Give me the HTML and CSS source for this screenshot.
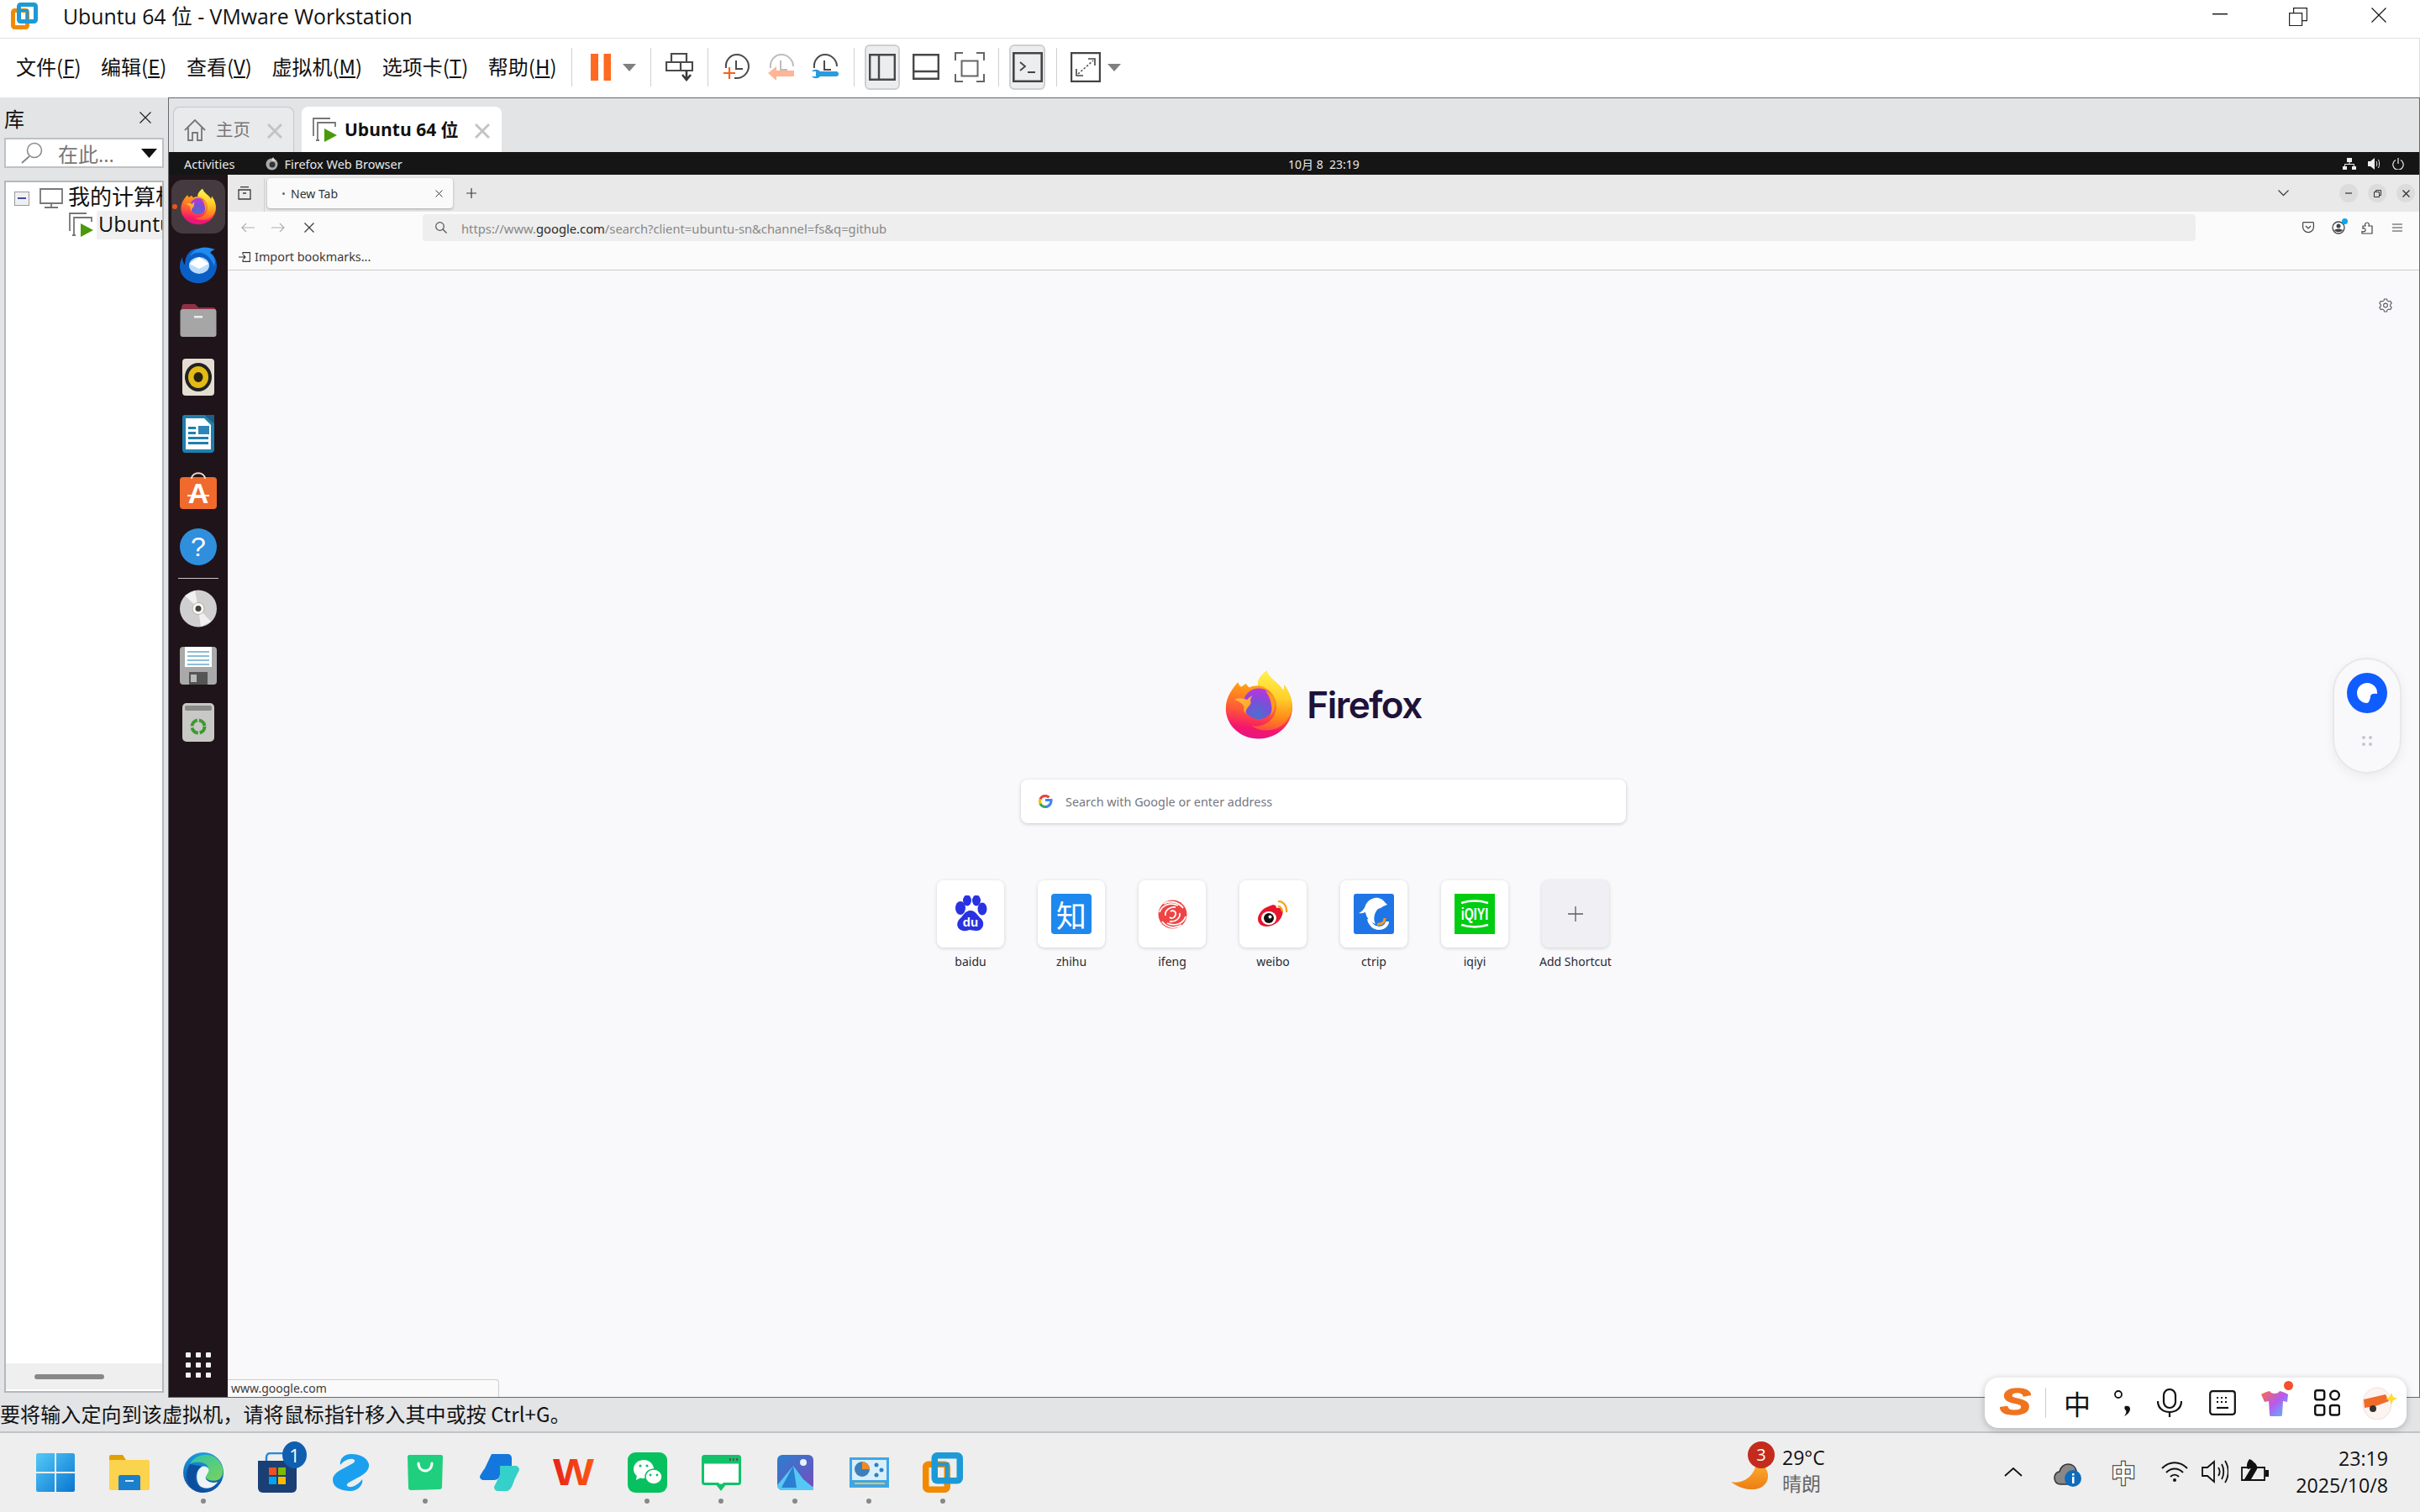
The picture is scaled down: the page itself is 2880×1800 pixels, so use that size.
FILE: index.html
```html
<!DOCTYPE html>
<html lang="zh-CN">
<head>
<meta charset="utf-8">
<title>Ubuntu 64 位 - VMware Workstation</title>
<link rel="stylesheet" href="styles.css">
</head>
<body>
<svg class="defs" aria-hidden="true">
  <defs>
    <linearGradient id="ffBody" x1=".6" y1="0" x2=".45" y2="1">
      <stop offset="0" stop-color="#ffd026"/><stop offset=".28" stop-color="#ff9a16"/><stop offset=".6" stop-color="#ff5a36"/><stop offset=".86" stop-color="#f5156c"/><stop offset="1" stop-color="#e31587"/>
    </linearGradient>
    <linearGradient id="ffWing" x1=".5" y1="0" x2=".45" y2="1">
      <stop offset="0" stop-color="#fff44f"/><stop offset=".45" stop-color="#ffcf2a"/><stop offset=".78" stop-color="#ff8a1a"/><stop offset="1" stop-color="#ff4f3d"/>
    </linearGradient>
    <linearGradient id="ffHead" x1="0" y1="0" x2="1" y2="1">
      <stop offset="0" stop-color="#ffc24f"/><stop offset="1" stop-color="#ff9a1a"/>
    </linearGradient>
    <radialGradient id="ffGlobe" cx=".45" cy=".85" r=".85">
      <stop offset="0" stop-color="#4a70cf"/><stop offset=".5" stop-color="#7a4fd8"/><stop offset="1" stop-color="#bb34e0"/>
    </radialGradient>
    <linearGradient id="winBlue" x1="0" y1="0" x2="1" y2="1"><stop offset="0" stop-color="#55c9f8"/><stop offset="1" stop-color="#0a76d0"/></linearGradient>
    <linearGradient id="edgeG" x1="0" y1="0" x2="1" y2="1"><stop offset="0" stop-color="#2fc3a8"/><stop offset="1" stop-color="#7ad45a"/></linearGradient>
    <linearGradient id="edgeB" x1="0" y1="0" x2="0" y2="1"><stop offset="0" stop-color="#1a9be0"/><stop offset="1" stop-color="#0c4f9f"/></linearGradient>
    <linearGradient id="shirtG" x1="0" y1="0" x2="1" y2="1"><stop offset="0" stop-color="#ff6a45"/><stop offset=".5" stop-color="#b45cf0"/><stop offset="1" stop-color="#4cc6ff"/></linearGradient>
    <linearGradient id="photoG" x1="0" y1="0" x2="1" y2="1"><stop offset="0" stop-color="#2a7fd0"/><stop offset="1" stop-color="#7a4bbd"/></linearGradient>
    <linearGradient id="moonG" x1="0" y1="0" x2="0" y2="1"><stop offset="0" stop-color="#fbb731"/><stop offset="1" stop-color="#ee7d14"/></linearGradient>
    <linearGradient id="wpsG" x1="0" y1="0" x2="1" y2="0"><stop offset="0" stop-color="#e8201a"/><stop offset="1" stop-color="#fb5a12"/></linearGradient>
    <symbol id="ff" viewBox="0 0 100 101">
      <path fill="url(#ffBody)" d="M19 17C11 26 1 39 1 56c0 25 22 45 49 45s50-20 50-47c0-13-6-25-12-33 0 3 0 6-2 8C80 18 65 12 62 0 55 5 47 14 49 22c-5 0-10 1-13 3-2-2-4-4-5-6l-7 5c-3-2-4-5-5-7z"/>
      <path fill="url(#ffWing)" d="M62 0C55 5 47 14 49 22c14 1 28 14 27 32-1 19-18 31-36 28 17 13 52 8 59-24 2-14-4-28-11-37 0 3 0 6-2 8C80 18 65 12 62 0z"/>
      <circle cx="50" cy="49" r="23" fill="url(#ffGlobe)"/>
      <path fill="url(#ffHead)" d="M14 43c6-3 13-2 19 0 2-3 5-5 8-6-3 3-4 6-3 9 1 4-3 6-6 11-1 2-2 5-1 7-3-2-4-6-3-9 1-5-8-10-14-12z"/>
      <path fill="#ff9a1f" d="M60 30c9 3 14 10 14 20 0 7-3 13-7 17 2-5 3-10 2-15-1-8-4-16-9-22z"/>
    </symbol>
    <symbol id="vm" viewBox="0 0 32 32">
      <rect x="2.500" y="9.500" width="17" height="20" rx="2" fill="none" stroke="#f18a00" stroke-width="5"/>
      <rect x="9.500" y="2.500" width="20" height="20" rx="2" fill="none" stroke="#1d9ad6" stroke-width="5"/>
      <rect x="9.500" y="9.500" width="10" height="13" fill="none" stroke="#1d9ad6" stroke-width="3"/>
    </symbol>
    <symbol id="vmrun" viewBox="0 0 30 30">
      <path fill="none" stroke="#777" stroke-width="1.800" d="M1 22V1h20M4 27h4"/>
      <path fill="none" stroke="#777" stroke-width="1.800" d="M6 26V6h21v5"/>
      <path fill="#4a9a0c" d="M14 13l15 8-15 8z"/>
    </symbol>
  </defs>
</svg>

<div class="app">
  <header class="titlebar">
    <svg class="title-logo" width="32" height="32"><use href="#vm"/></svg>
    <span class="title-text">Ubuntu 64 位 - VMware Workstation</span>
    <div class="winctl">
      <svg width="18" height="2" class="wc-min"><rect width="18" height="1.400" fill="#111"/></svg>
      <svg width="22" height="22" class="wc-max" viewBox="0 0 22 22"><path fill="none" stroke="#222" stroke-width="1.200" d="M.6 6.600h15v15H.6zM5.600 6.600V.6h15.800v15h-6"/></svg>
      <svg width="18" height="18" class="wc-close" viewBox="0 0 18 18"><path stroke="#111" stroke-width="1.100" d="M.5.5l17 17M17.500.5l-17 17"/></svg>
    </div>
  </header>

  <nav class="toolbar">
    <ul class="menus">
      <li>文件(<u>F</u>)</li><li>编辑(<u>E</u>)</li><li>查看(<u>V</u>)</li><li>虚拟机(<u>M</u>)</li><li>选项卡(<u>T</u>)</li><li>帮助(<u>H</u>)</li>
    </ul>
    <i class="sep s-first"></i>
    <svg class="ml22" width="24" height="32" viewBox="0 0 24 32"><path fill="#ff6a20" d="M0 0h9v32H0zM15.500 0h8.500v32h-8.500z"/></svg>
    <svg class="ml14" width="16" height="9" viewBox="0 0 16 9"><path fill="#808080" d="M0 0h16L8 9z"/></svg>
    <i class="sep ml17"></i>
    <svg class="ml17" width="33" height="34" viewBox="0 0 33 34"><path fill="none" stroke="#4a4a4a" stroke-width="2.200" d="M7 1h18v10H7zM1 11h31v10H1zM18 11v10"/><path fill="none" stroke="#3a3a3a" stroke-width="2.600" d="M25 21v11M20 26l5 6 5-6"/></svg>
    <i class="sep ml17"></i>
    <svg class="ml18" width="32" height="32" viewBox="0 0 32 32"><path fill="none" stroke="#4a4a4a" stroke-width="2" d="M3 17C2 8 8 1 16 1c8 0 14 7 14 14s-6 14-14 14h-3M15 8v10h8"/><path fill="none" stroke="#f5631f" stroke-width="2.200" d="M0 23h14M7 16v14"/></svg>
    <svg class="ml21" width="32" height="32" viewBox="0 0 32 32"><path fill="none" stroke="#bdbdbd" stroke-width="2" d="M3 17C2 8 8 1 16 1c8 0 14 7 14 14M15 8v11h8"/><path fill="#ffb596" d="M0 23l10-8v5h21v7H10v5z"/></svg>
    <svg class="ml20" width="32" height="32" viewBox="0 0 32 32"><path fill="none" stroke="#4a4a4a" stroke-width="2" d="M3 17C2 8 8 1 16 1c8 0 14 7 14 14M15 8v11h8"/><path fill="#2a9bdf" d="M0 21c3-3 7-3 10 0h19c2 0 3 1 3 3s-1 3-3 3H10c-3 3-7 3-10 0h5v-6z"/></svg>
    <i class="sep ml18"></i>
    <span class="pressed ml12 w42"><svg width="32" height="32" viewBox="0 0 32 32"><path fill="none" stroke="#484848" stroke-width="2.400" d="M1.200 1.200h29.600v29.600H1.200zM12 1v30"/></svg></span>
    <svg class="ml15" width="32" height="32" viewBox="0 0 32 32"><path fill="none" stroke="#484848" stroke-width="2.400" d="M1.200 1.200h29.600v28.600H1.200zM1 21h30"/></svg>
    <svg class="ml18" width="36" height="36" viewBox="0 0 36 36"><path fill="none" stroke="#666" stroke-width="2" d="M10 1H1v9M26 1h9v9M10 35H1v-9M26 35h9v-9M8.500 10.500h19v18h-19z"/></svg>
    <i class="sep ml16"></i>
    <span class="pressed ml12 w43"><svg width="36" height="36" viewBox="0 0 36 36"><path fill="none" stroke="#444" stroke-width="2.600" d="M1.300 1.300h33.400v33.400H1.300z"/><path fill="none" stroke="#444" stroke-width="1.800" d="M9 12l6 5-6 5M18 24h9"/></svg></span>
    <i class="sep ml13"></i>
    <svg class="ml16" width="36" height="36" viewBox="0 0 36 36"><path fill="none" stroke="#444" stroke-width="2.200" d="M1.100 1.100h33.800v33.800H1.100z"/><path fill="none" stroke="#444" stroke-width="1.600" d="M21 8h8v8M7 20v8h8"/><path fill="none" stroke="#555" stroke-width="1.600" stroke-dasharray="2.500 2" d="M9 26L27 10"/></svg>
    <svg class="ml8" width="16" height="9" viewBox="0 0 16 9"><path fill="#808080" d="M0 0h16L8 9z"/></svg>
  </nav>

  <main class="workspace">
    <aside class="library">
      <div class="lib-head"><span>库</span>
        <svg width="14" height="14" viewBox="0 0 14 14"><path stroke="#222" stroke-width="1.200" d="M.5.500l13 13M13.500.500l-13 13"/></svg>
      </div>
      <div class="lib-search">
        <svg width="26" height="26" viewBox="0 0 26 26"><circle cx="16" cy="10" r="8.500" fill="none" stroke="#888" stroke-width="1.500"/><path stroke="#888" stroke-width="2" d="M10 17L1 25"/></svg>
        <span class="lib-ph">在此...</span>
        <svg class="lib-arrow" width="19" height="11" viewBox="0 0 19 11"><path fill="#111" d="M0 0h19L9.500 11z"/></svg>
      </div>
      <div class="lib-tree">
        <div class="tree-body">
          <div class="tree-row">
            <span class="expander"><b></b></span>
            <svg class="tree-mon" width="28" height="24" viewBox="0 0 28 24"><path fill="none" stroke="#777" stroke-width="1.800" d="M1 1h26v17H1zM14 18v5M6 23h16"/></svg>
            <span class="tree-label">我的计算机</span>
          </div>
          <div class="tree-row tree-sub">
            <svg width="30" height="30"><use href="#vmrun"/></svg>
            <span class="tree-sel">Ubuntu 64 位</span>
          </div>
        </div>
        <div class="tree-scroll"><i></i></div>
      </div>
    </aside>

    <section class="vmpane">
      <div class="vmtabs">
        <div class="vmtab vmtab-home">
          <svg width="26" height="26" viewBox="0 0 26 26"><path fill="none" stroke="#777" stroke-width="1.800" d="M1 13L13 1l12 12M5 10v15h5v-9h6v9h5V10"/></svg>
          <span class="vmtab-t1">主页</span>
          <svg class="vm-x" width="18" height="18" viewBox="0 0 18 18"><path stroke="#c4c4c4" stroke-width="3" d="M1 1l16 16M17 1L1 17"/></svg>
        </div>
        <div class="vmtab vmtab-on">
          <svg width="30" height="30"><use href="#vmrun"/></svg>
          <span class="vmtab-t2">Ubuntu 64 位</span>
          <svg class="vm-x" width="18" height="18" viewBox="0 0 18 18"><path stroke="#c4c4c4" stroke-width="3" d="M1 1l16 16M17 1L1 17"/></svg>
        </div>
      </div>

      <div class="guest">
        <div class="gnome-bar">
          <span class="gb-act">Activities</span>
          <span class="gb-app"><svg width="15" height="16" viewBox="0 0 15 16"><circle cx="7.500" cy="8.500" r="7" fill="#aaa"/><circle cx="8" cy="9" r="3.500" fill="#333"/><path fill="#ddd" d="M9 0l3 5-5-1z"/></svg>Firefox Web Browser</span>
          <span class="gb-clock">10月 8  23:19</span>
          <span class="gb-tray">
            <svg width="16" height="14" viewBox="0 0 16 14"><path fill="#eee" d="M5 0h6v5H5zM0 10h5v4H0zM11 10h5v4h-5z"/><path fill="none" stroke="#eee" d="M8 5v3M2.500 10V7.500h11V10"/></svg>
            <svg width="15" height="14" viewBox="0 0 15 14"><path fill="#eee" d="M0 4h3l5-4v14L3 10H0z"/><path fill="none" stroke="#eee" d="M10 4c1 2 1 4 0 6M12.500 2c1.500 3 1.500 7 0 10"/></svg>
            <svg width="14" height="14" viewBox="0 0 14 14"><path fill="none" stroke="#eee" stroke-width="1.200" d="M4 2.500a6.200 6.200 0 1 0 6 0M7 0v7"/></svg>
          </span>
        </div>
        <div class="guest-main">
          <div class="dock">
            <div class="dock-item dock-active"><i class="dock-pip"></i><svg width="42" height="44"><use href="#ff"/></svg></div>
            <div class="dock-item">
              <svg width="48" height="46" viewBox="0 0 48 46"><path fill="#0b5fc4" d="M24 5c12 0 22 8 22 20S36 46 24 46 2 38 2 26c0-4 1-8 3-11 0 4 1 7 3 9C8 13 14 5 24 5z"/><path fill="#1f8bf0" d="M14 14C18 5 30 0 44 6c-3 1-5 2-6 4 5 4 7 10 5 16-3-8-8-14-15-16-5-1-10 0-14 4z"/><ellipse cx="25" cy="25" rx="12" ry="10" fill="#bcdcfb"/><path fill="#fff" d="M13.500 23l11.500-8 11.500 8-11.500 6z"/></svg>
            </div>
            <div class="dock-item">
              <svg width="44" height="40" viewBox="0 0 44 40"><path fill="#8f3045" d="M2 6c0-3 1-5 4-5h12l4 4h17c3 0 4 2 4 5v8H2z"/><rect y="7" x="0.500" width="43" height="33" rx="3" fill="#a6a6a6"/><rect x="17" y="15" width="10" height="2.500" fill="#eee"/></svg>
            </div>
            <div class="dock-item">
              <svg width="38" height="44" viewBox="0 0 38 44"><rect width="38" height="44" rx="4" fill="#e4ded2"/><ellipse cx="19" cy="22" rx="16" ry="17" fill="#222"/><ellipse cx="19" cy="22" rx="12" ry="13" fill="#e3bb16"/><ellipse cx="19" cy="22" rx="5.500" ry="6" fill="#272210"/></svg>
            </div>
            <div class="dock-item">
              <svg width="38" height="45" viewBox="0 0 38 45"><path fill="#1f7fae" d="M3 0h24l11 10v31c0 2-1 4-4 4H3c-2 0-3-2-3-4V3c0-2 1-3 3-3z"/><path fill="#fff" d="M4 4h22l8 8v29H4z"/><path fill="#1f5d8a" d="M27 0l11 10V0z"/><path fill="#1f7fae" d="M7 14h9v3H7zM7 20h9v3H7zM7 26h24v3H7zM7 32h24v3H7z"/><rect x="19" y="13" width="13" height="10" fill="#2d86b8"/></svg>
            </div>
            <div class="dock-item">
              <svg width="44" height="44" viewBox="0 0 44 44"><rect y="6" width="44" height="38" rx="4" fill="#ef6a2c"/><path fill="none" stroke="#f3d9c8" stroke-width="2" d="M14 8c0-9 16-9 16 0"/><text class="dock-a" x="22" y="37" text-anchor="middle">A</text><path stroke="#fff" stroke-width="2" d="M9 28h26"/></svg>
            </div>
            <div class="dock-item">
              <svg width="44" height="44" viewBox="0 0 44 44"><circle cx="22" cy="22" r="22" fill="#2f8fdd"/><text class="dock-q" x="22" y="33" text-anchor="middle">?</text></svg>
            </div>
            <i class="dock-sep"></i>
            <div class="dock-item">
              <svg width="44" height="45" viewBox="0 0 44 45"><circle cx="22" cy="22.500" r="22" fill="#cfcfcf"/><path fill="#f1f1f1" d="M22 22L6 7l12-6zM22 22l15 16-12 6z"/><circle cx="22" cy="22.500" r="7" fill="#fafafa" stroke="#b8ac98"/><circle cx="22" cy="22.500" r="3.500" fill="#444"/></svg>
            </div>
            <div class="dock-item">
              <svg width="44" height="45" viewBox="0 0 44 45"><rect width="44" height="45" rx="4" fill="#a9a9a9"/><rect x="6" y="0" width="32" height="24" fill="#fff"/><path stroke="#1f7fae" stroke-width="1.200" d="M9 6h26M9 11h26M9 16h26M9 21h26"/><rect x="11" y="30" width="22" height="15" fill="#555"/><rect x="13" y="33" width="7" height="9" fill="#bbb"/></svg>
            </div>
            <div class="dock-item">
              <svg width="38" height="46" viewBox="0 0 38 46"><rect width="38" height="46" rx="5" fill="#c8c8c4"/><rect x="3" y="3" width="32" height="6" rx="2" fill="#8a8a88"/><circle cx="19" cy="28" r="7.500" fill="none" stroke="#3c9a2e" stroke-width="4" stroke-dasharray="10 2"/></svg>
            </div>
            <div class="dock-grid"><i></i><i></i><i></i><i></i><i></i><i></i><i></i><i></i><i></i></div>
          </div>

          <div class="firefox">
            <div class="ff-tabbar">
              <svg class="ff-view" width="16" height="16" viewBox="0 0 16 16"><path fill="none" stroke="#3a3a3a" stroke-width="1.300" d="M3 .7h10M1 4h14v11H1zM6 8h4"/></svg>
              <i class="ff-div"></i>
              <div class="ff-tab"><span class="ff-bullet"></span><span>New Tab</span>
                <svg class="ff-tabx" width="9" height="9" viewBox="0 0 9 9"><path stroke="#3d3d3d" d="M.5.500l8 8M8.500.500l-8 8"/></svg>
              </div>
              <svg class="ff-plus" width="12" height="12" viewBox="0 0 12 12"><path stroke="#3d3d3d" stroke-width="1.200" d="M6 0v12M0 6h12"/></svg>
              <svg class="ff-chev" width="13" height="8" viewBox="0 0 13 8"><path fill="none" stroke="#444" stroke-width="1.300" d="M.5.500l6 6 6-6"/></svg>
              <span class="ff-wb"><svg width="8" height="2" viewBox="0 0 8 2"><path stroke="#333" stroke-width="1.200" d="M0 1h8"/></svg></span>
              <span class="ff-wb"><svg width="9" height="9" viewBox="0 0 9 9"><path fill="none" stroke="#333" d="M.5 2.500h6v6h-6zM2.500 2.500v-2h6v6h-2"/></svg></span>
              <span class="ff-wb"><svg width="9" height="9" viewBox="0 0 9 9"><path stroke="#333" stroke-width="1.300" d="M.5.500l8 8M8.500.500l-8 8"/></svg></span>
            </div>
            <div class="ff-nav">
              <svg width="16" height="12" viewBox="0 0 16 12"><path fill="none" stroke="#b0b0b0" stroke-width="1.200" d="M16 6H1M6 1L1 6l5 5"/></svg>
              <svg class="nav-fwd" width="16" height="12" viewBox="0 0 16 12"><path fill="none" stroke="#b0b0b0" stroke-width="1.200" d="M0 6h15M10 1l5 5-5 5"/></svg>
              <svg class="nav-stop" width="12" height="12" viewBox="0 0 12 12"><path stroke="#3a3a3a" stroke-width="1.200" d="M.5.500l11 11M11.500.500l-11 11"/></svg>
              <div class="ff-url">
                <svg width="14" height="14" viewBox="0 0 14 14"><circle cx="5.500" cy="5.500" r="4.800" fill="none" stroke="#555" stroke-width="1.200"/><path stroke="#555" stroke-width="1.200" d="M9 9l4.500 4.500"/></svg>
                <span class="url-text">https://www.<b>google.com</b>/search?client=ubuntu-sn&amp;channel=fs&amp;q=github</span>
              </div>
              <svg class="nav-pocket" width="14" height="14" viewBox="0 0 14 14"><path fill="none" stroke="#444" stroke-width="1.200" d="M1.500.6h11c.6 0 .9.400.9 1v5c0 3-3 6-6.400 6S.6 9.600.6 6.600v-5c0-.6.300-1 .9-1zM4 5l3 3 3-3"/></svg>
              <span class="nav-acc"><svg width="16" height="16" viewBox="0 0 16 16"><circle cx="8" cy="8" r="7" fill="none" stroke="#444" stroke-width="1.300"/><circle cx="8" cy="6" r="2.500" fill="#444"/><path fill="#444" d="M3 11c2-2 8-2 10 0-2 3-8 3-10 0z"/></svg><i></i></span>
              <svg class="nav-ext" width="14" height="15" viewBox="0 0 14 15"><path fill="none" stroke="#444" stroke-width="1.200" d="M1 14h12V5H9c1-2 0-4-2-4S4 3 5 5H2v3c2-1 3 0 3 2s-2 2-4 1.500z"/></svg>
              <svg class="nav-menu" width="12" height="10" viewBox="0 0 12 10"><path stroke="#444" stroke-width="1.200" d="M0 1h12M0 5h12M0 9h12"/></svg>
            </div>
            <div class="ff-bm">
              <svg width="14" height="12" viewBox="0 0 14 12"><path fill="none" stroke="#333" stroke-width="1.100" d="M5 3V.6h8.400v10.800H5V9M0 6h8M5.500 3.500L8 6 5.500 8.500"/></svg>
              <span>Import bookmarks...</span>
            </div>
            <div class="ff-content">
              <svg class="ff-gear" width="16" height="17" viewBox="0 0 16 17"><path fill="none" stroke="#5b5b66" stroke-width="1.100" d="M6.500 1h3l.5 2 1.700 1 2-.6 1.500 2.600-1.500 1.500v2L15.200 11l-1.500 2.600-2-.6-1.700 1-.5 2h-3l-.5-2-1.700-1-2 .6L.8 11l1.500-1.500v-2L.8 6l1.500-2.600 2 .6 1.700-1z"/><circle cx="8" cy="8.500" r="2.400" fill="none" stroke="#5b5b66" stroke-width="1.100"/></svg>
              <div class="brand">
                <svg width="80" height="82"><use href="#ff"/></svg>
                <span class="brand-name">Firefox</span>
              </div>
              <div class="ff-search">
                <svg width="18" height="18" viewBox="0 0 18 18"><path fill="none" stroke="#4285f4" stroke-width="3.200" d="M9 7.500h7c.3 4-2.500 8-7 8"/><path fill="none" stroke="#34a853" stroke-width="3.200" d="M9 15.500c-2.700 0-5-1.500-6-3.800"/><path fill="none" stroke="#fbbc05" stroke-width="3.200" d="M3 11.700c-.7-1.800-.7-3.700 0-5.400"/><path fill="none" stroke="#ea4335" stroke-width="3.200" d="M3 6.300c1-2.200 3.300-3.800 6-3.800 1.700 0 3.200.6 4.400 1.700"/></svg>
                <span>Search with Google or enter address</span>
              </div>
              <div class="tiles">
                <div class="tile"><div class="tile-card">
                  <svg width="40" height="44" viewBox="0 0 40 44"><g fill="#2932e1"><ellipse cx="8" cy="15" rx="6" ry="8"/><ellipse cx="16" cy="6" rx="5" ry="6.500"/><ellipse cx="27" cy="6" rx="5" ry="6.500"/><ellipse cx="34" cy="16" rx="5.500" ry="7.500"/><path d="M20 18c6 0 8 6 13 10 5 6 1 15-7 14-3 0-5-1-7-1s-4 2-8 1C4 41 2 33 7 28c4-3 6-10 13-10z"/></g><text class="baidu-du" x="20" y="37" text-anchor="middle">du</text></svg>
                </div><span>baidu</span></div>
                <div class="tile"><div class="tile-card">
                  <span class="ico-zhihu">知</span>
                </div><span>zhihu</span></div>
                <div class="tile"><div class="tile-card">
                  <svg width="35" height="35" viewBox="0 0 35 35"><circle cx="17.500" cy="17.500" r="17" fill="#f04444"/><g fill="none" stroke="#fff" stroke-width="1.800"><path d="M7 5c7-4 17-3 23 5"/><path d="M2 15C4 8 13 2 24 7"/><path d="M28 30c-7 5-17 4-23-4"/><path d="M33 20c-2 7-11 13-22 8"/><path d="M9 19c-1-6 5-11 12-10"/><path d="M26 16c1 6-5 11-12 10"/><path d="M15 14c3-2 7 0 6 4s-5 5-7 3"/></g></svg>
                </div><span>ifeng</span></div>
                <div class="tile"><div class="tile-card">
                  <svg width="36" height="32" viewBox="0 0 36 32"><path fill="#e6162d" d="M13 7c6-3 9-2 9 2 6-1 9 2 7 8-2 8-11 14-19 14-6 0-10-4-10-9 0-6 6-13 13-15z"/><ellipse cx="13" cy="21" rx="9" ry="8" fill="#fff"/><circle cx="13" cy="21" r="6" fill="#111"/><circle cx="14.500" cy="19.500" r="2" fill="#fff"/><path fill="none" stroke="#f5a623" stroke-width="2.400" d="M24 1c6 0 11 5 10 13M24 7c3 0 5 3 5 6"/></svg>
                </div><span>weibo</span></div>
                <div class="tile"><div class="tile-card">
                  <svg width="48" height="48" viewBox="0 0 48 48"><rect width="48" height="48" rx="3" fill="#1f75e6"/><path fill="#fff" d="M25 5c5-1 10 2 12 5l3 3-5 2c-2 2-4 2-6 3-5 5-6 13-3 18-7-2-11-8-12-14-5 2-7 1-8 1 3-1 7-5 8-9 2-5 6-8 11-9z"/><path fill="none" stroke="#fff" stroke-width="4" d="M18 30c1 6 6 11 12 11s10-4 10-8"/><path fill="none" stroke="#f39a1e" stroke-width="3" d="M28 36c5 1 9-2 9-7"/></svg>
                </div><span>ctrip</span></div>
                <div class="tile"><div class="tile-card">
                  <svg width="48" height="48" viewBox="0 0 48 48"><rect width="48" height="48" fill="#00cc11"/><path fill="none" stroke="#fff" stroke-width="2.500" d="M8 11c10-3 22-3 32 0M8 37c10 3 22 3 32 0"/><text class="ico-iqiyi" transform="translate(24 31) scale(.95 1.350)" text-anchor="middle">iQIYI</text></svg>
                </div><span>iqiyi</span></div>
                <div class="tile"><div class="tile-card tile-add">
                  <svg width="18" height="18" viewBox="0 0 18 18"><path stroke="#5b5b66" stroke-width="1.300" d="M9 0v18M0 9h18"/></svg>
                </div><span>Add Shortcut</span></div>
              </div>
              <div class="float-pill">
                <svg width="48" height="48" viewBox="0 0 48 48"><circle cx="24" cy="24" r="24" fill="#0f5cff"/><path fill="#fff" d="M24 12a12 12 0 0 1 12 13c-4-1-8 0-8 3 0 3-2 8-4 8a12 12 0 0 1 0-24z"/></svg>
                <div class="pill-dots"><i></i><i></i><i></i><i></i></div>
              </div>
              <div class="ff-status">www.google.com</div>
            </div>
          </div>
        </div>
      </div>
    </section>
  </main>

  <footer class="statusbar">要将输入定向到该虚拟机，请将鼠标指针移入其中或按 Ctrl+G。</footer>

  <div class="taskbar">
    <div class="task"><div class="task-ico"><svg width="46" height="46" viewBox="0 0 46 46"><path fill="url(#winBlue)" d="M0 2c0-1 1-2 2-2h20v22H0zM24 0h20c1 0 2 1 2 2v20H24zM0 24h22v22H2c-1 0-2-1-2-2zM24 24h22v20c0 1-1 2-2 2H24z"/></svg></div><i class="dot off"></i></div>
    <div class="task"><div class="task-ico"><svg width="48" height="42" viewBox="0 0 48 42"><path fill="#e0a100" d="M0 2c0-1 1-2 2-2h14l4 6H0z"/><path fill="#fcd34d" d="M0 6h46c1 0 2 1 2 2v32c0 1-1 2-2 2H2c-1 0-2-1-2-2z"/><path fill="#1b7fcc" d="M13 24h22c1 0 2 1 2 2v16H11V26c0-1 1-2 2-2z"/><rect x="19" y="30" width="10" height="2" fill="#cde8fa"/></svg></div><i class="dot off"></i></div>
    <div class="task"><div class="task-ico"><svg width="48" height="48" viewBox="0 0 48 48"><circle cx="24" cy="24" r="24" fill="url(#edgeB)"/><path fill="url(#edgeG)" d="M8 14C14 2 34-3 44 12c5 8 4 16-1 20-5 3-14 2-16-2-2-5 4-6 3-11-1-7-14-10-22-5z"/><path fill="#eef3f7" d="M22 17c5-2 10 2 8 6-2 5-5 6-2 10 3 3 9 4 13 2-5 9-17 10-22 4-5-7-3-19 3-22z"/><path fill="#0c4f9f" d="M8 14c-7 12-5 27 9 33 3 1 7 1 9 0-8-3-13-11-11-20 1-5 4-8 7-10-5-2-11-2-14-3z"/></svg></div><i class="dot"></i></div>
    <div class="task">
      <div class="task-ico task-store"><svg width="46" height="48" viewBox="0 0 46 48"><path fill="none" stroke="#2b88d8" stroke-width="2.500" d="M10 10V6c0-3 2-5 5-5h16c3 0 5 2 5 5v4"/><path fill="#1a3f75" d="M0 10h46v32c0 3-2 6-6 6H6c-4 0-6-3-6-6z"/><path fill="#f25022" d="M13 18h9v9h-9z"/><path fill="#7fba00" d="M24 18h9v9h-9z"/><path fill="#00a4ef" d="M13 29h9v9h-9z"/><path fill="#ffb900" d="M24 29h9v9h-9z"/></svg><span class="store-badge">1</span></div><i class="dot off"></i></div>
    <div class="task"><div class="task-ico"><svg width="44" height="44" viewBox="0 0 44 44"><path fill="#1ba0ef" d="M22 0c10 0 19 4 21 12 1 7-5 12-13 16l-11 6c-3 2-3 4 0 5 5 1 12-3 16-9 2 6-5 14-14 14C9 44 0 39 0 31c0-6 5-10 13-14l11-6c3-2 3-4 0-5-5-1-11 2-15 7C8 6 13 0 22 0z"/></svg></div><i class="dot off"></i></div>
    <div class="task"><div class="task-ico"><svg width="42" height="42" viewBox="0 0 42 42"><path fill="#1fcf7d" d="M2 0h38c1 0 2 1 2 2l-1 36c0 2-1 3-3 3L4 42c-2 0-3-1-3-3L0 2C0 1 1 0 2 0z"/><path fill="none" stroke="#fff" stroke-width="3" stroke-linecap="round" d="M13 10c0 12 16 12 16 0"/></svg></div><i class="dot"></i></div>
    <div class="task"><div class="task-ico"><svg width="47" height="44" viewBox="0 0 47 44"><path fill="#1477dd" d="M14 0h19c3 0 5 2 5 5v9H24v10c0 4-3 7-7 7H4c-2 0-4-2-4-4 0-1 3-6 6-10z"/><path fill="#35d0c9" d="M24 14h18c3 0 5 2 5 5l-5 10c-2 4-4 15-10 15H22c-3 0-5-2-5-5l7-14z"/></svg></div><i class="dot off"></i></div>
    <div class="task"><div class="task-ico"><svg width="49" height="46" viewBox="0 0 49 46"><text class="ico-wps" x="24.500" y="38" text-anchor="middle" textLength="49" lengthAdjust="spacingAndGlyphs">W</text></svg></div><i class="dot off"></i></div>
    <div class="task"><div class="task-ico"><svg width="47" height="48" viewBox="0 0 47 48"><rect width="47" height="48" rx="9" fill="#07c160"/><ellipse cx="19" cy="20" rx="12" ry="11" fill="#fff"/><path fill="#fff" d="M11 27l-1 6 6-3z"/><ellipse cx="31" cy="29" rx="10" ry="9" fill="#fff" stroke="#07c160" stroke-width="1.500"/><g fill="#07c160"><circle cx="15" cy="16" r="1.600"/><circle cx="23" cy="16" r="1.600"/><circle cx="27" cy="27" r="1.400"/><circle cx="35" cy="27" r="1.400"/></g></svg></div><i class="dot"></i></div>
    <div class="task"><div class="task-ico"><svg width="47" height="43" viewBox="0 0 47 43"><rect x="1.500" y="1.500" width="44" height="33" rx="2" fill="#fff" stroke="#12c26a" stroke-width="3"/><rect x="1.500" y="1.500" width="44" height="9" fill="#12c26a"/><path fill="#12c26a" d="M16 34h14l-7 9z"/><path fill="#fff" stroke="#fff" d="M21 33h4v1h-4z"/><g fill="#555"><rect x="33" y="4" width="2" height="3"/><rect x="37" y="4" width="2" height="3"/><rect x="41" y="4" width="2" height="3"/></g></svg></div><i class="dot"></i></div>
    <div class="task"><div class="task-ico"><svg width="43" height="42" viewBox="0 0 43 42"><rect width="43" height="42" rx="6" fill="url(#photoG)"/><circle cx="31" cy="9" r="4" fill="#e8f3ff"/><path fill="#56c8f5" d="M0 36L19 13l12 16 12 10v3H6c-3 0-6-2-6-6z"/><path fill="#2a7fd0" d="M19 13l4 26H5z"/></svg></div><i class="dot"></i></div>
    <div class="task"><div class="task-ico"><svg width="47" height="36" viewBox="0 0 47 36"><rect width="47" height="36" fill="#3ea6e6"/><rect x="3" y="3" width="41" height="24" fill="#d8eefb"/><circle cx="15" cy="14" r="9" fill="#3d7fb8"/><path fill="#f08a24" d="M15 5a9 9 0 0 1 9 9h-9z"/><g fill="#2a82c2"><circle cx="32" cy="9" r="2.500"/><circle cx="38" cy="15" r="2.500"/><circle cx="32" cy="21" r="2.500"/></g><path stroke="#f7c14a" stroke-width="2" d="M6 31h36"/></svg></div><i class="dot"></i></div>
    <div class="task"><div class="task-ico"><svg width="48" height="48"><use href="#vm"/></svg></div><i class="dot"></i></div>

    <div class="weather">
      <svg class="moon" width="45" height="36" viewBox="0 0 45 36"><path fill="url(#moonG)" d="M31 0c14 9 18 25 6 33-10 6-26 3-37-6 12 3 29-4 31-27z"/></svg>
      <span class="weather-badge">3</span>
      <div class="weather-t"><span>29°C</span><span class="weather-sub">晴朗</span></div>
    </div>
    <svg class="tray-chev" width="22" height="11" viewBox="0 0 22 11"><path fill="none" stroke="#111" stroke-width="1.800" d="M1 10l10-9 10 9"/></svg>
    <span class="tray-cloud"><svg width="34" height="28" viewBox="0 0 34 28"><path fill="#888" stroke="#333" stroke-width="1.600" d="M8 25C3 25 1 21 1 17c0-4 3-7 6-7 1-5 5-9 10-9s9 3 10 8v7L18 25z"/><circle cx="23" cy="18" r="10" fill="#0f6cbd"/><path fill="#fff" d="M22 16h2.500v8H22zM22 12h2.500v2.500H22z"/></svg></span>
    <span class="tray-ime">中</span>
    <svg class="tray-wifi" width="32" height="24" viewBox="0 0 32 24"><g fill="none" stroke="#111" stroke-width="2"><path d="M1 8c9-9 21-9 30 0"/><path d="M6 13c6-6 14-6 20 0"/><path d="M11 18c3-3 7-3 10 0"/></g><circle cx="16" cy="22" r="2" fill="#111"/></svg>
    <svg class="tray-spk" width="32" height="28" viewBox="0 0 32 28"><path fill="none" stroke="#111" stroke-width="1.800" d="M1 9h6l8-7v24l-8-7H1zM20 9c2 3 2 7 0 10M24 5c3 5 3 13 0 18M28 1c5 8 5 18 0 26"/></svg>
    <svg class="tray-bat" width="33" height="26" viewBox="0 0 33 26"><path fill="none" stroke="#111" stroke-width="1.800" d="M1 10h27v15H1z"/><path fill="#111" d="M29 13h4v8h-4zM4 24L16 4c3 3 4 6 3 8l-7 12z"/><path fill="#111" d="M10 0c5 2 8 6 6 10l-8 2c-2-4-1-8 2-12z"/></svg>
    <div class="clock"><span>23:19</span><span>2025/10/8</span></div>
  </div>

  <div class="ime">
    <svg class="ime-s" width="37" height="44" viewBox="0 0 37 44"><text class="ime-s-t" x="18.500" y="36" text-anchor="middle" textLength="37" lengthAdjust="spacingAndGlyphs">S</text></svg>
    <i class="ime-sep"></i>
    <span class="ime-zh">中</span>
    <svg class="ime-p" width="20" height="32" viewBox="0 0 20 32"><circle cx="5" cy="6" r="4" fill="none" stroke="#111" stroke-width="1.800"/><path fill="#111" d="M13 20c3-1 6 0 6 3 0 4-3 7-7 9 2-3 3-5 2-7-2-1-2-4-1-5z"/></svg>
    <svg class="ime-mic" width="30" height="34" viewBox="0 0 30 34"><rect x="8" y="1" width="14" height="22" rx="7" fill="none" stroke="#111" stroke-width="2.200"/><path fill="none" stroke="#111" stroke-width="2.200" d="M1 15c0 8 6 13 14 13s14-5 14-13M15 28v6"/></svg>
    <svg class="ime-kb" width="32" height="30" viewBox="0 0 32 30"><rect x="1.200" y="1.200" width="29.600" height="27.600" rx="3" fill="none" stroke="#111" stroke-width="2.200"/><path stroke="#111" stroke-width="2" stroke-dasharray="2 3" d="M9 9h15M9 14h15"/><path stroke="#111" stroke-width="2.200" d="M9 21h14"/></svg>
    <span class="ime-shirt"><svg width="36" height="32" viewBox="0 0 36 32"><path fill="url(#shirtG)" d="M0 6c3-2 6-3 10-4 2 4 10 4 12 0 4 1 7 2 10 4l-1 9-5-1-1 16c0 2-1 2-3 2H13c-2 0-3 0-3-2L9 14l-5 1z"/></svg><i></i></span>
    <svg class="ime-grid" width="31" height="32" viewBox="0 0 31 32"><g fill="none" stroke="#111" stroke-width="2.400"><rect x="1.200" y="1.200" width="11" height="11" rx="2.500"/><circle cx="24.500" cy="7" r="5.300"/><rect x="1.200" y="19" width="11" height="11.500" rx="2.500"/><rect x="19" y="19" width="11" height="11.500" rx="2.500"/></g></svg>
    <svg class="ime-fox" width="42" height="40" viewBox="0 0 42 40"><ellipse cx="18" cy="21" rx="17" ry="19" fill="#fbf4f0" stroke="#f5dcd6"/><path fill="#f06a28" d="M2 16l26-6 4 8-16 6-13 2z"/><circle cx="13" cy="27" r="4" fill="#333"/><path fill="#ffd92e" d="M35 8l2 5 5 2-5 2-2 5-2-5-5-2 5-2z"/></svg>
  </div>
</div>
</body>
</html>
```

FILE: styles.css
```css
* { box-sizing: border-box; }
html, body { margin: 0; padding: 0; width: 2880px; height: 1800px; overflow: hidden; background: #fff; }
body { font-family: "Open Sans", "Noto Sans CJK SC", sans-serif; color: #111; }
ul { list-style: none; margin: 0; padding: 0; }
i { font-style: normal; display: block; }
svg { display: block; flex: none; }
.defs { position: absolute; width: 0; height: 0; }
.app { position: relative; width: 2880px; height: 1800px; display: flex; flex-direction: column; }

/* Window title */
.titlebar { height: 46px; flex: none; display: flex; align-items: flex-start; background: #fff; border-bottom: 1px solid #e0e0e0; padding: 3px 0 0 13px; }
.title-text { margin-left: 30px; font-size: 24.800px; line-height: 32px; color: #111; }
.winctl { margin-left: auto; display: flex; align-items: flex-start; height: 42px; padding-right: 40px; }
.wc-min { margin-top: 13px; }
.wc-max { margin: 6px 0 0 73px; }
.wc-close { margin: 6px 0 0 76px; }

/* VMware toolbar */
.toolbar { height: 70px; flex: none; display: flex; align-items: center; background: #fff; padding: 0 0 2px 19px; border-right: 1px solid #e0e0e0; }
.menus { display: flex; gap: 23.500px; font: 24px/34px "Noto Sans CJK SC", sans-serif; width: 661px; flex: none; color: #111; padding-bottom: 3px; }
.menus li { white-space: nowrap; }
.sep { width: 1px; height: 46px; background: #d0d0d0; flex: none; }
.ml8 { margin-left: 8px; } .ml12 { margin-left: 12px; } .ml13 { margin-left: 13px; } .ml14 { margin-left: 14px; }
.ml15 { margin-left: 15px; } .ml16 { margin-left: 16px; } .ml17 { margin-left: 17px; } .ml18 { margin-left: 18px; }
.ml20 { margin-left: 20px; } .ml21 { margin-left: 21px; } .ml22 { margin-left: 22px; }
.pressed { height: 54px; flex: none; display: flex; align-items: center; justify-content: center; background: #ecedef; border: 2px solid #cdcfd1; border-radius: 6px; }
.w42 { width: 42px; } .w43 { width: 43px; }

/* Main row */
.workspace { height: 1548px; flex: none; display: flex; background: #e3e4e6; }
.library { width: 200px; flex: none; display: flex; flex-direction: column; padding: 0 5px; }
.lib-head { height: 48px; flex: none; display: flex; align-items: center; justify-content: space-between; font-size: 24px; padding-right: 15px; }
.lib-search { height: 36px; flex: none; display: flex; align-items: center; background: #fff; border: 2px solid #bfc1c4; padding-left: 18px; }
.lib-ph { margin-left: 18px; font-size: 24px; color: #777; }
.lib-arrow { margin-left: auto; margin-right: 6px; }
.lib-tree { margin-top: 15px; height: 1443px; display: flex; flex-direction: column; background: #fff; border: 2px solid #b5b7ba; }
.tree-body { flex: 1; overflow: hidden; padding-top: 4px; }
.tree-row { display: flex; align-items: center; height: 30px; white-space: nowrap; font-size: 26px; line-height: 30px; padding-left: 10px; overflow: hidden; }
.expander { width: 18px; height: 17px; border: 1px solid #9a9a9a; background: #f0f0f4; display: flex; align-items: center; justify-content: center; flex: none; }
.expander b { width: 10px; height: 2px; background: #3b4fa0; }
.tree-mon { margin-left: 12px; }
.tree-label { margin-left: 6px; position: relative; top: -2px; }
.tree-sub { height: 34px; margin-top: 0; padding-left: 75px; }
.tree-sel { margin-left: 3px; padding: 0 2px; height: 34px; line-height: 30px; background: #f0f0f0; flex: 1; overflow: hidden; font-size: 25px; }
.tree-scroll { height: 33px; flex: none; background: #efefef; border-bottom: 2px solid #fff; display: flex; align-items: center; padding-left: 34px; }
.tree-scroll i { width: 83px; height: 6px; border-radius: 3px; background: #888; }

/* VM pane */
.vmpane { width: 2680px; flex: none; display: flex; flex-direction: column; border: 1px solid #66686b; }
.vmtabs { height: 64px; flex: none; display: flex; align-items: flex-end; padding-left: 5px; gap: 9px; background: #e3e4e6; }
.vmtab { height: 54px; display: flex; align-items: center; border: 1px solid #c5c7ca; border-bottom: 0; border-radius: 8px 8px 0 0; flex: none; position: relative; }
.vmtab-home { width: 144px; background: #e9eaec; padding-left: 12px; }
.vmtab-on { width: 238px; background: #fff; border-color: #fff; padding-left: 12px; }
.vmtab-t1 { margin-left: 12px; font-size: 20.500px; line-height: 28px; color: #777; margin-bottom: 2px; }
.vmtab-t2 { margin-left: 8px; font-size: 21px; line-height: 28px; font-weight: 700; color: #111; white-space: nowrap; margin-bottom: 2px; }
.vm-x { position: absolute; right: 13px; top: 19px; }

/* Guest: GNOME + Firefox */
.guest { flex: 1; min-height: 0; display: flex; flex-direction: column; }
.gnome-bar { height: 27px; flex: none; background: #151515; color: #e8e8e8; display: flex; align-items: center; font: 14.500px "Noto Sans", "Noto Sans CJK SC", sans-serif; padding-left: 18px; position: relative; }
.gb-app { display: flex; align-items: center; gap: 7px; margin-left: 37px; }
.gb-clock { position: absolute; left: 1332px; white-space: pre; font-size: 14px; }
.gb-tray { margin-left: auto; display: flex; align-items: center; gap: 14px; padding-right: 18px; }
.guest-main { flex: 1; min-height: 0; display: flex; }
.dock { width: 70px; flex: none; background: #1f141a; display: flex; flex-direction: column; align-items: center; padding-top: 6px; position: relative; }
.dock-item { width: 64px; height: 67.500px; flex: none; display: flex; align-items: center; justify-content: center; position: relative; }
.dock-active { height: 64px; background: #453a3f; border-radius: 14px; margin-bottom: 2px; }
.dock-pip { position: absolute; left: 1px; top: 29px; width: 6px; height: 6px; border-radius: 50%; background: #e95420; }
.dock-sep { width: 48px; height: 1px; background: #c8c6c7; flex: none; margin: 3px 0 2px; }
.dock-grid { margin-top: auto; margin-bottom: 23px; display: grid; grid-template-columns: repeat(3, 6px); gap: 6px; }
.dock-grid i { width: 6px; height: 6px; background: #f2f2f2; border-radius: 1px; }
.dock-a { font: 700 34px "Liberation Sans", sans-serif; fill: #fff; }
.dock-q { font: 400 32px "Liberation Sans", sans-serif; fill: #fff; }

.firefox { flex: 1; min-width: 0; display: flex; flex-direction: column; font-family: "Noto Sans", sans-serif; color: #333; }
.ff-tabbar { height: 44px; flex: none; background: #e9e9e9; display: flex; align-items: center; padding-left: 12px; }
.ff-div { width: 1px; height: 40px; align-self: flex-end; background: #cfcfcf; margin-left: 15px; }
.ff-tab { width: 221px; height: 36px; margin-left: 3px; background: #fafafa; border-radius: 4px; box-shadow: 0 1px 3px rgba(0,0,0,.3); display: flex; align-items: center; padding-left: 18px; font-size: 14px; color: #333; }
.ff-bullet { width: 3px; height: 3px; border-radius: 50%; background: #666; margin-right: 7px; }
.ff-tabx { margin-left: auto; margin-right: 12px; }
.ff-plus { margin-left: 16px; }
.ff-chev { margin-left: auto; }
.ff-chev + .ff-wb { margin-left: 60px; }
.ff-wb { width: 22px; height: 22px; border-radius: 50%; background: #dcdcdc; display: flex; align-items: center; justify-content: center; margin-left: 12px; flex: none; }
.ff-wb:last-child { margin-right: 5px; }
.ff-nav { height: 38px; flex: none; background: #fbfbfb; display: flex; align-items: center; padding-left: 16px; }
.nav-fwd { margin-left: 20px; }
.nav-stop { margin-left: 23px; }
.ff-url { width: 2110px; height: 32px; margin-left: 129px; background: #eeeeee; border-radius: 4px; display: flex; align-items: center; padding-left: 15px; font-size: 14.750px; color: #888; }
.url-text { margin-left: 17px; white-space: nowrap; line-height: 30px; padding-top: 2px; }
.url-text b { font-weight: 400; color: #2a2a2a; }
.nav-pocket { margin-left: 127px; }
.nav-acc { margin-left: 21px; position: relative; }
.nav-acc i { position: absolute; right: -3px; top: -3px; width: 7px; height: 7px; border-radius: 50%; background: #0aa5f5; }
.nav-ext { margin-left: 19px; }
.nav-menu { margin-left: 23px; }
.ff-bm { height: 32px; flex: none; background: #fbfbfb; border-bottom: 1px solid #ccc; display: flex; align-items: center; gap: 5px; padding-left: 13px; font-size: 14.400px; color: #3a3a3a; }
.ff-content { flex: 1; min-height: 0; background: #f9f9fb; position: relative; display: flex; flex-direction: column; align-items: center; padding-top: 476px; }
.ff-gear { position: absolute; right: 32px; top: 33px; }
.brand { display: flex; align-items: center; gap: 17px; height: 82px; }
.brand-name { font: 600 44px Inter, sans-serif; color: #20123a; letter-spacing: -1.500px; }
.ff-search { width: 720px; height: 52px; margin-top: 48px; background: #fff; border-radius: 8px; box-shadow: 0 1px 4px rgba(0,0,0,.2); display: flex; align-items: center; padding-left: 20px; gap: 15px; font-size: 14.400px; color: #77777f; }
.tiles { width: 960px; margin-top: 68px; display: grid; grid-template-columns: repeat(8, 120px); }
.tile { display: flex; flex-direction: column; align-items: center; font-size: 14px; color: #2b2a33; }
.tile-card { width: 80px; height: 80px; background: #fff; border-radius: 8px; box-shadow: 0 1px 4px rgba(0,0,0,.16); display: flex; align-items: center; justify-content: center; margin-bottom: 7px; }
.tile-add { background: #f0f0f4; }
.ico-zhihu { width: 48px; height: 48px; background: #1e88ee; color: #fff; border-radius: 4px; font: 36px/48px "Noto Sans CJK SC", sans-serif; text-align: center; }
.ico-iqiyi { font: 700 15px "Liberation Sans", sans-serif; fill: #fff; }
.baidu-du { font: 700 15px "Liberation Sans", sans-serif; fill: #fff; }
.float-pill { position: absolute; right: 21px; top: 461px; width: 82px; height: 138px; border-radius: 41px; background: #f9f9fb; border: 2px solid #e8e8ea; box-shadow: 0 4px 14px rgba(0,0,0,.06); display: flex; flex-direction: column; align-items: center; padding-top: 16px; }
.pill-dots { margin-top: 27px; display: grid; grid-template-columns: repeat(2, 4px); gap: 4px; }
.pill-dots i { width: 4px; height: 4px; border-radius: 50%; background: #c6c6ce; }
.ff-status { position: absolute; left: 0; bottom: 0; width: 323px; height: 21px; background: #fafafa; border: 1px solid #ccc; border-width: 1px 1px 0 0; border-top-right-radius: 4px; font-size: 14px; line-height: 20px; padding-left: 4px; color: #3d3d3d; }

/* Status + task bars */
.statusbar { height: 42px; flex: none; background: #e3e4e6; border-bottom: 2px solid #c2c3c5; font: 24px/38px "Noto Sans CJK SC", sans-serif; letter-spacing: .12px; color: #111; white-space: nowrap; }
.taskbar { flex: 1; min-height: 0; background: #eeeeee; display: flex; align-items: flex-start; padding: 0 38px 0 22px; }
.task { width: 88px; flex: none; padding-top: 22px; display: flex; flex-direction: column; align-items: center; }
.task-ico { height: 50px; display: flex; align-items: center; justify-content: center; position: relative; }
.dot { width: 6px; height: 6px; margin-top: 6px; border-radius: 50%; background: #888; }
.dot.off { visibility: hidden; }
.store-badge { position: absolute; right: -12px; top: -12px; width: 29px; height: 32px; border-radius: 50%; background: #0f5fb0; color: #fff; font-size: 22px; line-height: 32px; text-align: center; }
.weather { margin-left: auto; height: 90px; width: 111px; position: relative; display: flex; align-items: center; padding-left: 61px; flex: none; }
.moon { position: absolute; left: 0; top: 31px; }
.weather-badge { position: absolute; left: 20px; top: 10px; width: 32px; height: 32px; border-radius: 50%; background: #c42b1c; color: #fff; font-size: 20px; line-height: 32px; text-align: center; }
.weather-t { display: flex; flex-direction: column; font-size: 23px; line-height: 31px; white-space: nowrap; }
.weather-sub { color: #666; }
.tray-chev { margin: 41px 0 0 214px; }
.tray-cloud { margin: 36px 0 0 37px; display: block; }
.tray-ime { margin: 30px 0 0 34px; font: 900 30px/32px "Noto Sans CJK SC", sans-serif; color: #fff; -webkit-text-stroke: 1px #333; width: 30px; flex: none; }
.tray-wifi { margin: 34px 0 0 30px; }
.tray-spk { margin: 32px 0 0 16px; }
.tray-bat { margin: 31px 0 0 15px; }
.clock { margin-left: 32px; width: 110px; height: 92px; display: flex; flex-direction: column; justify-content: center; align-items: flex-end; font-size: 23.200px; line-height: 32px; white-space: nowrap; }

/* IME floating bar */
.ime { position: absolute; left: 2362px; top: 1640px; width: 502px; height: 60px; background: #fff; border-radius: 16px; box-shadow: 0 2px 8px rgba(0,0,0,.22); display: flex; align-items: center; padding-left: 18px; }
.ime-s-t { font: italic 700 44px "Liberation Sans", sans-serif; fill: #f0741f; stroke: #f0741f; stroke-width: 1.500px; }
.ime-sep { width: 1px; height: 36px; background: #ccc; margin-left: 17px; flex: none; }
.ime-zh { margin-left: 21px; font: 32px/40px "Noto Sans CJK SC", sans-serif; color: #111; }
.ime-p { margin-left: 28px; }
.ime-mic { margin-left: 31px; }
.ime-kb { margin-left: 32px; }
.ime-shirt { margin-left: 30px; position: relative; display: block; }
.ime-shirt i { position: absolute; right: -2px; top: -10px; width: 11px; height: 11px; border-radius: 50%; background: #f4502a; }
.ime-grid { margin-left: 27px; }
.ime-fox { margin-left: 26px; }
.ico-wps { font: 900 44px "Liberation Sans", sans-serif; fill: url(#wpsG); }
```
